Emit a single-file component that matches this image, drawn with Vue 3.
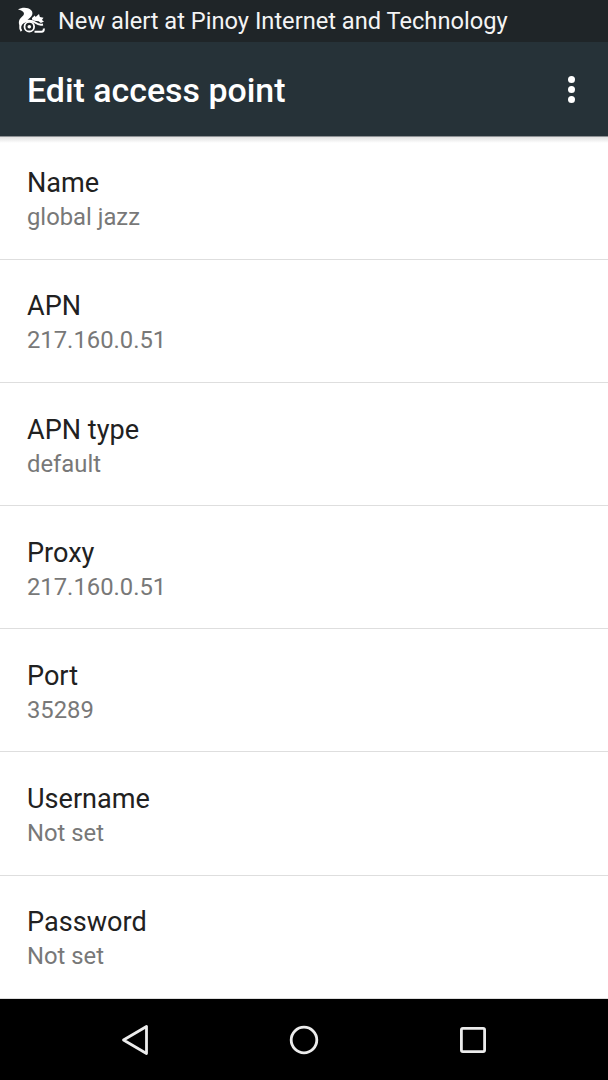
<template>
  <div class="screen">
    <div class="status">
      <svg class="uc" viewBox="0 0 28 26">
        <path fill="#fff" d="M1 2.500C5 .2 11 .3 14 3c2 2 1.800 4.500.2 6.500-1.500 1.800-3.400 2.600-4.200 4.300C7 14.500 4.500 16.500 3.500 20 1 17 1.500 13 4.200 10.500 6 8.800 7.500 7.600 6.800 5.800 6.200 4.300 3.800 3 1 2.500z"/>
        <path fill="#fff" d="M15 11l2.800-2.600.8 1.700 3.400-3.100.9 3.100 3.600.6-1.600 2.200 2.100 1.600-3.100 1.500-2.300-1.700-4.300-.5-2.300-1.200z"/>
        <path fill="none" stroke="#fff" stroke-width="2" d="M4.500 24c-2.200-2.600-1.600-6.300 1.200-8.400 3.600-2.600 9.300-2.400 12.800.2 2.200 1.600 4.700 2.200 7.500 1.600"/>
        <circle cx="12.300" cy="19.700" r="4.800" fill="none" stroke="#fff" stroke-width="1.800"/>
        <circle cx="12.300" cy="19.700" r="1.800" fill="#fff"/>
        <path fill="none" stroke="#fff" stroke-width="2" d="M17.500 24.800h7c1.800 0 2.600-1.300 2.200-3.300"/>
      </svg>
      <span class="alert">New alert at Pinoy Internet and Technology</span>
    </div>
    <header class="toolbar">
      <h1>Edit access point</h1>
      <div class="more">
        <i></i><i></i><i></i>
      </div>
    </header>
    <main class="list">
      <div v-for="item in items" :key="item.title" class="row">
        <div class="title">{{ item.title }}</div>
        <div class="value">{{ item.value }}</div>
      </div>
    </main>
    <nav class="navbar">
      <svg width="28" height="32" viewBox="0 0 28 32">
        <path d="M25.500 2.500V29.500L2.500 16z" fill="none" stroke="#ececec" stroke-width="2.800" stroke-linejoin="round"/>
      </svg>
      <svg width="30" height="30" viewBox="0 0 30 30">
        <circle cx="15" cy="15" r="12.800" fill="none" stroke="#ececec" stroke-width="2.800"/>
      </svg>
      <svg width="28" height="28" viewBox="0 0 28 28">
        <rect x="2.400" y="2.400" width="23.200" height="23.200" rx="1.500" fill="none" stroke="#ececec" stroke-width="2.800"/>
      </svg>
    </nav>
  </div>
</template>

<script setup>
const items = [
  { title: 'Name', value: 'global jazz' },
  { title: 'APN', value: '217.160.0.51' },
  { title: 'APN type', value: 'default' },
  { title: 'Proxy', value: '217.160.0.51' },
  { title: 'Port', value: '35289' },
  { title: 'Username', value: 'Not set' },
  { title: 'Password', value: 'Not set' }
]
</script>

<style>
html, body {
  margin: 0;
  background: #fff;
}
</style>

<style scoped>
.screen {
  width: 608px;
  height: 1080px;
  display: flex;
  flex-direction: column;
  font-family: Roboto, "Liberation Sans", sans-serif;
  overflow: hidden;
}

.status {
  height: 42px;
  flex: none;
  background: #1f2528;
  display: flex;
  align-items: center;
  padding-left: 17px;
  box-sizing: border-box;
}

.uc {
  width: 28px;
  height: 26px;
  flex: none;
  margin-top: -2px;
}

.alert {
  margin-left: 13px;
  color: #f4f4f4;
  font-size: 23.650px;
  white-space: nowrap;
}

.toolbar {
  height: 95px;
  flex: none;
  background: #263238;
  display: flex;
  align-items: center;
  justify-content: space-between;
  padding: 0 33px 0 27px;
  box-sizing: border-box;
  border-bottom: 1px solid #8d9194;
}

h1 {
  margin: 3px 0 0;
  color: #fff;
  font-size: 33.900px;
  font-weight: 500;
}

.more {
  display: flex;
  flex-direction: column;
  gap: 3px;
}

.more i {
  display: block;
  width: 7px;
  height: 7px;
  border-radius: 50%;
  background: #fff;
}

.list {
  flex: 1;
  min-height: 0;
  overflow: hidden;
  background: linear-gradient(#e2e2e2, #f4f4f4 4px, #fff 6px);
}

.row {
  height: 123.100px;
  box-sizing: border-box;
  padding: 29.350px 27px 0;
  border-bottom: 1px solid #dedede;
}

.row:last-child {
  border-bottom: none;
}

.title {
  font-size: 27.100px;
  line-height: 34px;
  color: #212121;
}

.value {
  font-size: 23.800px;
  line-height: 34px;
  color: #787878;
}

.navbar {
  height: 82px;
  flex: none;
  background: #000;
  display: flex;
  align-items: center;
  justify-content: space-between;
  padding: 0 121px;
  border-top: 1px solid #ddd;
  box-sizing: border-box;
}
</style>
